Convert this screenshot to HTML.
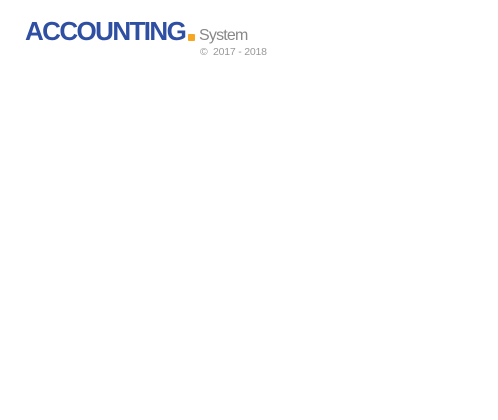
<!DOCTYPE html>
<html><head><style>
body{margin:0;width:498px;height:420px;background:#fff;position:relative;overflow:hidden;font-family:"Liberation Sans",sans-serif}
.t{position:absolute;left:25px;top:16px;font-size:26px;font-weight:bold;color:#2f4fa2;letter-spacing:-1.6px;white-space:nowrap}
.d{position:absolute;left:188px;top:34px;width:7px;height:7px;background:#f5a623;border-radius:1px}
.s{position:absolute;left:199px;top:27px;font-size:16px;color:#888;letter-spacing:-0.8px}
.c{position:absolute;left:200px;top:46px;font-size:10.5px;color:#999;letter-spacing:-0.2px}
</style></head><body>
<div class="t">ACCOUNTING</div>
<div class="d"></div>
<div class="s">System</div>
<div class="c">©&nbsp; 2017 - 2018</div>
</body></html>
